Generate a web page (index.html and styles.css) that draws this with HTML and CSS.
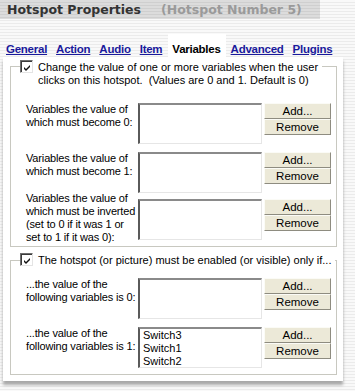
FILE: index.html
```html
<!DOCTYPE html>
<html>
<head>
<meta charset="utf-8">
<link rel="stylesheet" href="styles.css">
</head>
<body>
<div class="titlebar"><span class="title">Hotspot Properties</span><span class="subtitle">(Hotspot Number 5)</span></div>
<nav class="tabs">
  <a class="tab">General</a>
  <a class="tab">Action</a>
  <a class="tab">Audio</a>
  <a class="tab">Item</a>
  <span class="tab active">Variables</span>
  <a class="tab">Advanced</a>
  <a class="tab">Plugins</a>
</nav>
<div class="panel">
  <div class="group g1">
    <div class="ghead">
      <span class="check"><svg width="9" height="9" viewBox="0 0 9 9"><path d="M1 4 L3 6 L7 2 L7 4 L3 8 L1 6 Z" fill="#111"/></svg></span>
      <span class="gtext">Change the value of one or more variables when the user<br>clicks on this hotspot.&nbsp; (Values are 0 and 1. Default is 0)</span>
    </div>
    <div class="row r1">
      <div class="label">Variables the value of<br>which must become 0:</div>
      <div class="list"></div>
      <div class="btns"><div class="btn">Add...</div><div class="btn">Remove</div></div>
    </div>
    <div class="row r2">
      <div class="label">Variables the value of<br>which must become 1:</div>
      <div class="list"></div>
      <div class="btns"><div class="btn">Add...</div><div class="btn">Remove</div></div>
    </div>
    <div class="row r3">
      <div class="label tall">Variables the value of<br>which must be inverted<br>(set to 0 if it was 1 or<br>set to 1 if it was 0):</div>
      <div class="list"></div>
      <div class="btns"><div class="btn">Add...</div><div class="btn">Remove</div></div>
    </div>
  </div>
  <div class="group g2">
    <div class="ghead">
      <span class="check"><svg width="9" height="9" viewBox="0 0 9 9"><path d="M1 4 L3 6 L7 2 L7 4 L3 8 L1 6 Z" fill="#111"/></svg></span>
      <span class="gtext">The hotspot (or picture) must be enabled (or visible) only if...</span>
    </div>
    <div class="row r4">
      <div class="label">...the value of the<br>following variables is 0:</div>
      <div class="list"></div>
      <div class="btns"><div class="btn">Add...</div><div class="btn">Remove</div></div>
    </div>
    <div class="row r5">
      <div class="label">...the value of the<br>following variables is 1:</div>
      <div class="list"><div>Switch3</div><div>Switch1</div><div>Switch2</div></div>
      <div class="btns"><div class="btn">Add...</div><div class="btn">Remove</div></div>
    </div>
  </div>
</div>
</body>
</html>
```

FILE: styles.css
```css
html, body {
  margin: 0;
  padding: 0;
}
body {
  width: 355px;
  height: 391px;
  overflow: hidden;
  background: repeating-linear-gradient(to bottom, #f9f9f9 0px, #f9f9f9 2px, #ebebeb 2px, #ebebeb 3px);
  font-family: "Liberation Sans", Arial, sans-serif;
  font-size: 11px;
  color: #000;
}
.titlebar {
  width: 320px;
  height: 19px;
  background: repeating-linear-gradient(to bottom, #dcdcdc 0px, #dcdcdc 2px, #cfcfcf 2px, #cfcfcf 3px);
  font-family: "DejaVu Sans", Verdana, sans-serif;
  font-weight: bold;
  font-size: 12.5px;
  line-height: 19px;
  padding-left: 7px;
  box-sizing: border-box;
  white-space: nowrap;
}
.title { color: #333; }
.subtitle { color: #9a9a9a; margin-left: 20px; }
.tabs {
  display: flex;
  height: 38px;
  padding-left: 3px;
  align-items: flex-end;
  box-sizing: border-box;
}
.tab {
  font-weight: bold;
  font-size: 11.5px;
  color: #1a1a9c;
  text-decoration: underline;
  padding: 8px 4px 0 3px;
  height: 23px;
  line-height: 14px;
  box-sizing: border-box;
  margin-right: 2px;
  letter-spacing: -0.25px;
}
.tab.active {
  background: #fff;
  color: #000;
  text-decoration: none;
  padding: 8px 5px 0 4px;
}
.panel {
  margin-left: 3px;
  width: 340px;
  height: 324px;
  background: #fff;
  box-shadow: 0 4px 3px #a8a8a8;
  padding: 9px 0 0 7px;
  box-sizing: border-box;
}
.group {
  width: 327px;
  border: 1px solid #c8c8c0;
  box-sizing: border-box;
  padding: 0 4px 0 15px;
  display: flex;
  flex-direction: column;
  align-items: flex-start;
}
.g1 { height: 181px; }
.g2 { height: 115px; margin-top: 13px; }
.ghead {
  display: flex;
  align-items: flex-start;
  background: #fff;
  margin-left: -6px;
  padding-right: 4px;
  line-height: 13px;
  white-space: nowrap;
}
.g1 .ghead { margin-top: -6px; }
.g2 .ghead { margin-top: -7px; }
.check {
  flex: none;
  width: 13px;
  height: 13px;
  box-sizing: border-box;
  border-top: 1px solid #6e6e6e;
  border-left: 1px solid #6e6e6e;
  border-right: 1px solid #e4e4e4;
  border-bottom: 1px solid #e4e4e4;
  box-shadow: inset 1px 1px 0 #3a3a3a;
  background: #fff;
  display: flex;
  align-items: center;
  justify-content: center;
  margin-right: 5px;
  margin-top: -1px;
  padding: 1px 0 0 1px;
}
.row {
  display: flex;
  align-items: flex-start;
  line-height: 13px;
}
.r1 { margin-top: 16px; }
.r2 { margin-top: 8px; }
.r3 { margin-top: 6px; }
.r4 { margin-top: 11px; }
.r5 { margin-top: 8px; }
.label {
  width: 112px;
  white-space: nowrap;
  letter-spacing: -0.15px;
}
.label.tall { margin-top: -7px; margin-bottom: -4px; }
.list {
  width: 124px;
  height: 41px;
  box-sizing: border-box;
  border-top: 2px solid #8a8a8a;
  border-left: 2px solid #5a5a5a;
  border-right: 1px solid #e6e6e6;
  border-bottom: 1px solid #e6e6e6;
  background: #fff;
  padding: 0 0 0 3px;
  line-height: 13px;
}
.btns {
  margin-left: 2px;
  width: 67px;
  display: flex;
  flex-direction: column;
}
.btn {
  height: 16px;
  box-sizing: border-box;
  background: #ece9d8;
  border-top: 1px solid #fbfbf6;
  border-left: 1px solid #fbfbf6;
  border-right: 1px solid #8e8c80;
  border-bottom: 1px solid #8e8c80;
  text-align: center;
  line-height: 14px;
  font-size: 11.5px;
}
```
